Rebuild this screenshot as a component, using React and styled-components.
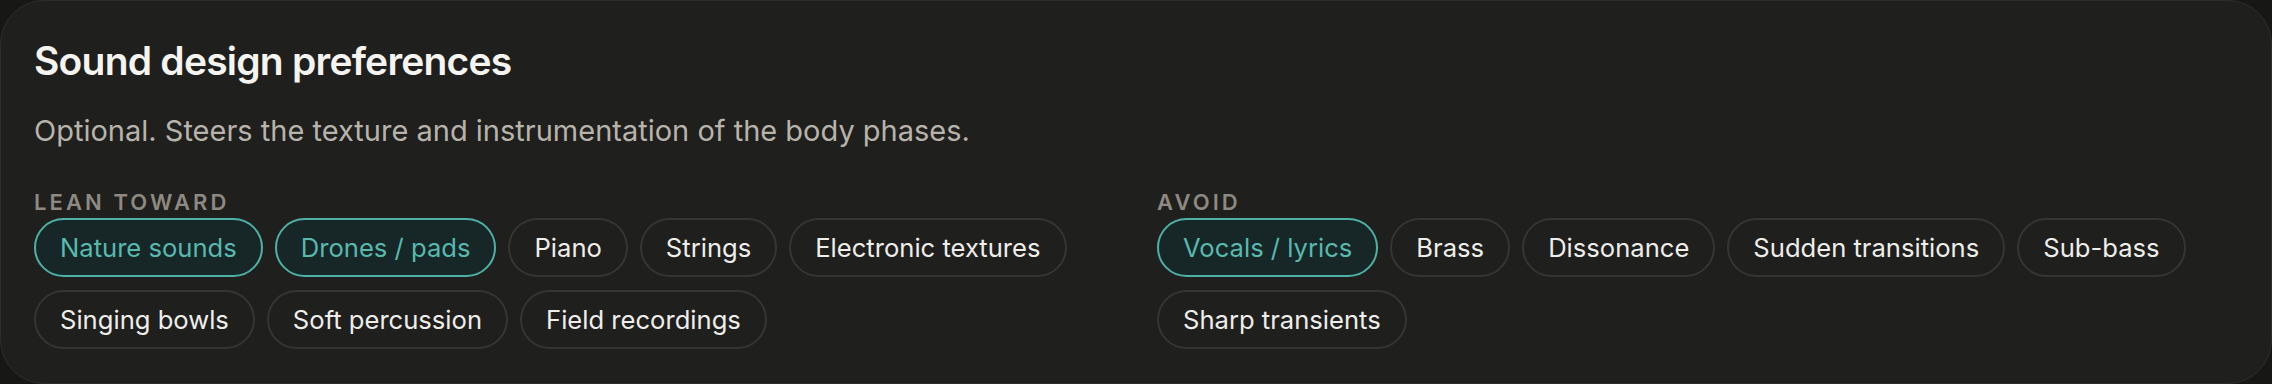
import React from 'react';
import styled, { createGlobalStyle } from 'styled-components';

const GlobalStyle = createGlobalStyle`
  body {
    margin: 0;
    background: #171716;
    font-family: Inter, "Noto Sans", sans-serif;
  }
`

const Card = styled.section`
  box-sizing: border-box;
  height: 384px;
  background: #1f1f1d;
  border: 1px solid #2d2d2b;
  border-radius: 44px;
  padding: 38px 33px 34px;
`
const Title = styled.h2`
  margin: 0;
  font-size: 39px;
  line-height: 44px;
  font-weight: 600;
  letter-spacing: -0.02em;
  color: #f5f4f0;
`
const Subtitle = styled.p`
  margin: 30px 0 0;
  font-size: 29px;
  line-height: 36px;
  color: #b8b3ab;
`
const Columns = styled.div`
  display: grid;
  grid-template-columns: 1fr 1fr;
  column-gap: 42px;
  margin-top: 40px;
`
const Label = styled.div`
  font-size: 22px;
  line-height: 26px;
  font-weight: 600;
  letter-spacing: 0.14em;
  text-transform: uppercase;
  color: #8e8981;
  margin-bottom: 3px;
`
const Chips = styled.div`
  display: flex;
  flex-wrap: wrap;
  gap: 13px 12px;
`
const Chip = styled.button`
  box-sizing: border-box;
  height: 59px;
  padding: 0 24px;
  border-radius: 999px;
  border: 2px solid ${p => (p.$on ? '#4fb0a7' : '#353533')};
  background: ${p => (p.$on ? '#172728' : 'transparent')};
  color: ${p => (p.$on ? '#58b9af' : '#efeeeb')};
  font-family: Inter, "Noto Sans", sans-serif;
  font-size: 25.6px;
  cursor: pointer;
`

const lean = [
  ['Nature sounds', true],
  ['Drones / pads', true],
  ['Piano'],
  ['Strings'],
  ['Electronic textures'],
  ['Singing bowls'],
  ['Soft percussion'],
  ['Field recordings'],
]
const avoid = [
  ['Vocals / lyrics', true],
  ['Brass'],
  ['Dissonance'],
  ['Sudden transitions'],
  ['Sub-bass'],
  ['Sharp transients'],
]

function Group({ label, items }) {
  return (
    <div>
      <Label>{label}</Label>
      <Chips>
        {items.map(([name, on]) => (
          <Chip key={name} $on={!!on}>{name}</Chip>
        ))}
      </Chips>
    </div>
  )
}

export default function App() {
  return (
    <>
      <GlobalStyle />
      <Card>
        <Title>Sound design preferences</Title>
        <Subtitle>Optional. Steers the texture and instrumentation of the body phases.</Subtitle>
        <Columns>
          <Group label="Lean toward" items={lean} />
          <Group label="Avoid" items={avoid} />
        </Columns>
      </Card>
    </>
  )
}
